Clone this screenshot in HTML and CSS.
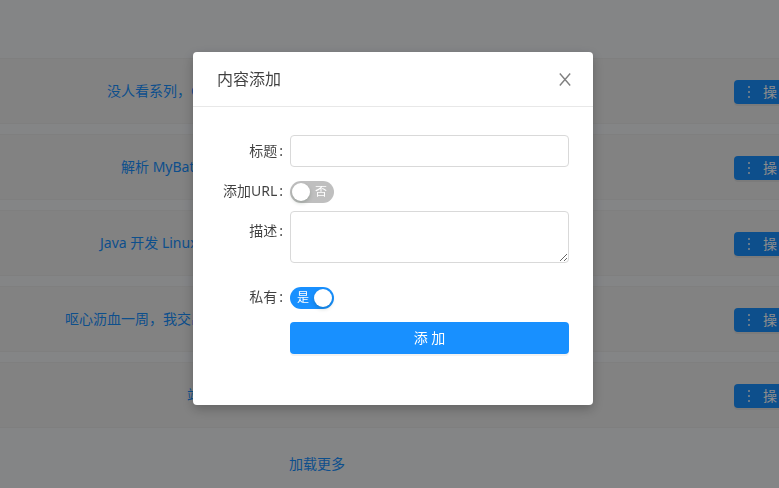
FILE: index.html
```html
<!DOCTYPE html>
<html lang="zh-CN">
<head>
  <meta charset="UTF-8">
  <meta name="viewport" content="width=device-width, initial-scale=1.0">
  <title>内容添加</title>
  <link rel="stylesheet" href="styles.css">
</head>
<body>
<main class="page">
  <ul class="list">
    <li class="card">
      <div class="card-main"><a class="card-title title-md" href="#">没人看系列，C</a></div>
      <button class="btn btn-small" type="button"><span class="dots"></span>操</button>
    </li>
    <li class="card">
      <div class="card-main"><a class="card-title title-sm" href="#">解析 MyBatis</a></div>
      <button class="btn btn-small" type="button"><span class="dots"></span>操</button>
    </li>
    <li class="card">
      <div class="card-main"><a class="card-title title-lg" href="#">Java 开发 Linux</a></div>
      <button class="btn btn-small" type="button"><span class="dots"></span>操</button>
    </li>
    <li class="card">
      <div class="card-main"><a class="card-title title-xl" href="#">呕心沥血一周，我交出</a></div>
      <button class="btn btn-small" type="button"><span class="dots"></span>操</button>
    </li>
    <li class="card">
      <div class="card-main"><a class="card-title title-xs" href="#">站</a></div>
      <button class="btn btn-small" type="button"><span class="dots"></span>操</button>
    </li>
  </ul>
  <div class="load-more"><a href="#">加载更多</a></div>
</main>

<div class="mask">
  <div class="modal" role="dialog" aria-modal="true" aria-labelledby="modalTitle">
    <div class="modal-header">
      <h2 class="modal-title" id="modalTitle">内容添加</h2>
      <button class="modal-close" type="button" aria-label="关闭">
        <svg width="16" height="16" viewBox="0 0 16 16" fill="none" stroke="currentColor" stroke-width="1.4">
          <path d="M2.8 2.5L13.2 14.5M13.2 2.5L2.8 14.5"/>
        </svg>
      </button>
    </div>
    <form class="modal-body">
      <div class="form-item">
        <label class="form-label" for="title">标题</label>
        <input class="field" type="text" id="title">
      </div>
      <div class="form-item">
        <label class="form-label" for="addUrl">添加URL</label>
        <span class="switch">
          <input type="checkbox" id="addUrl">
          <span class="switch-text switch-off">否</span>
          <span class="switch-text switch-on">是</span>
        </span>
      </div>
      <div class="form-item form-item-area">
        <label class="form-label" for="desc">描述</label>
        <textarea class="field" id="desc"></textarea>
      </div>
      <div class="form-item">
        <label class="form-label" for="private">私有</label>
        <span class="switch">
          <input type="checkbox" id="private" checked>
          <span class="switch-text switch-off">否</span>
          <span class="switch-text switch-on">是</span>
        </span>
      </div>
      <div class="form-item">
        <button class="btn btn-submit" type="submit">添 加</button>
      </div>
    </form>
  </div>
</div>
</body>
</html>
```
FILE: styles.css
```css
* {
  box-sizing: border-box;
}

body {
  margin: 0;
  min-height: 100vh;
  font-family: "Noto Sans", "Noto Sans CJK SC", sans-serif;
  font-size: 14px;
  line-height: 22px;
  color: rgba(0, 0, 0, 0.75);
  background: #f0f2f5;
  overflow: hidden;
}

a {
  color: #1890ff;
  text-decoration: none;
}

button,
input,
textarea {
  font: inherit;
}

/* list behind the dialog */
.page {
  padding-top: 58px;
}

.list {
  display: flex;
  flex-direction: column;
  gap: 10px;
  margin: 0;
  padding: 0;
  list-style: none;
}

.card {
  display: grid;
  grid-template-columns: 1fr 45px;
  align-items: center;
  height: 66px;
  background: #ededed;
  border-top: 1px solid #e8e8e8;
  border-bottom: 1px solid #e8e8e8;
}

.card-main,
.load-more {
  display: flex;
  justify-content: center;
  padding-right: 100px;
}

.card-title {
  white-space: nowrap;
}

.title-xs {
  width: 260px;
}

.title-sm {
  width: 392px;
}

.title-md {
  width: 420px;
}

.title-lg {
  width: 434px;
}

.title-xl {
  width: 504px;
}

.load-more {
  padding-top: 25px;
  padding-right: 145px;
}

.btn {
  color: #fff;
  background: #1890ff;
  border: none;
  border-radius: 4px;
  box-shadow: 0 2px 0 rgba(0, 0, 0, 0.05);
  cursor: pointer;
}

.btn-small {
  display: flex;
  align-items: center;
  gap: 13px;
  width: 80px;
  height: 24px;
  margin-top: 2px;
  padding: 0 14px;
  white-space: nowrap;
}

.dots {
  flex: none;
  width: 2px;
  height: 12px;
  background: repeating-linear-gradient(#fff 0 2px, transparent 2px 5px);
  opacity: 0.7;
}

/* dialog */
.mask {
  position: fixed;
  inset: 0;
  padding: 52px 0 0 7px;
  background: rgba(0, 0, 0, 0.45);
}

.modal {
  width: 100%;
  max-width: 400px;
  margin: 0 auto;
  background: #fff;
  border-radius: 4px;
  box-shadow: 0 4px 12px rgba(0, 0, 0, 0.25);
}

.modal-header {
  display: flex;
  align-items: center;
  justify-content: space-between;
  padding: 16px 20px 16px 24px;
  border-bottom: 1px solid #e8e8e8;
}

.modal-title {
  margin: 0;
  font-size: 16px;
  font-weight: 400;
  line-height: 22px;
}

.modal-close {
  display: flex;
  padding: 0;
  color: rgba(0, 0, 0, 0.5);
  background: none;
  border: none;
  cursor: pointer;
}

.modal-body {
  padding: 24px 24px 48px;
}

.form-item {
  display: flex;
  align-items: center;
  min-height: 40px;
}

.form-item-area {
  align-items: flex-start;
  padding-bottom: 14px;
}

.form-label {
  flex: none;
  width: 73px;
  padding-right: 7px;
  line-height: 40px;
  text-align: right;
  white-space: nowrap;
}

.form-label::after {
  content: ":";
  margin-left: 2px;
}

.field {
  flex: 1;
  min-width: 0;
  height: 32px;
  padding: 4px 11px;
  border: 1px solid #d9d9d9;
  border-radius: 4px;
  outline: none;
}

textarea.field {
  height: 52px;
  resize: vertical;
}

.field:focus {
  border-color: #40a9ff;
}

.switch {
  display: grid;
  align-items: center;
  margin-top: 2px;
}

.switch input,
.switch-text {
  grid-area: 1 / 1;
}

.switch input {
  appearance: none;
  display: flex;
  width: 44px;
  height: 22px;
  margin: 0;
  padding: 2px;
  background: #bfbfbf;
  border-radius: 11px;
  cursor: pointer;
}

.switch input::before {
  content: "";
  width: 18px;
  height: 18px;
  background: #fff;
  border-radius: 50%;
  box-shadow: 0 2px 4px rgba(0, 35, 11, 0.2);
}

.switch input:checked {
  justify-content: flex-end;
  background: #1890ff;
}

.switch-text {
  padding: 0 7px;
  font-size: 12px;
  color: #fff;
  pointer-events: none;
}

.switch-off {
  text-align: right;
}

.switch-on,
.switch input:checked ~ .switch-off {
  visibility: hidden;
}

.switch input:checked ~ .switch-on {
  visibility: visible;
}

.btn-submit {
  flex: 1;
  height: 32px;
  margin: 2px 0 0 73px;
}
```
